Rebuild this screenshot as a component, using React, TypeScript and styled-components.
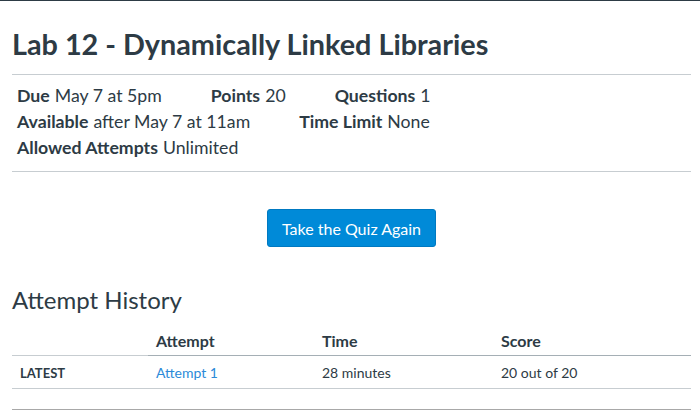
import React from "react";
import styled, { createGlobalStyle } from "styled-components";

const GlobalStyle = createGlobalStyle`
  html, body { margin: 0; padding: 0; background: #fff; }
  body {
    font-family: Lato, "Open Sans", "Liberation Sans", sans-serif;
    color: #2d3b45;
  }
`;

const Page = styled.div`
  border-top: 1px solid #2d3b45;
  padding: 0 9px 0 12px;
  width: 679px;
`;

const Title = styled.h1`
  margin: 0;
  padding-top: 26px;
  font-size: 28.8px;
  line-height: 34px;
  font-weight: 700;
  letter-spacing: 0;
`;

const Rule = styled.hr<{ $tone?: "light" | "dark" }>`
  margin: 0;
  border: 0;
  border-top: 1px solid ${(p) => (p.$tone === "dark" ? "#a8a8a8" : "#c7cdd1")};
`;

const TitleRule = styled(Rule)`
  margin-top: 13px;
`;

const Details = styled.div`
  display: flex;
  flex-direction: column;
  padding: 8px 5px 10px 5px;
`;

const DetailRow = styled.div`
  display: flex;
  column-gap: 49px;
  font-size: 17.7px;
  line-height: 26px;
`;

const Detail = styled.div`
  display: flex;
  gap: 5px;
`;

const Label = styled.span`
  font-weight: 700;
`;

const Value = styled.span`
  font-weight: 400;
`;

const ButtonRow = styled.div`
  display: flex;
  justify-content: center;
  padding: 37px 0 0;
`;

const PrimaryButton = styled.button`
  font-family: inherit;
  font-size: 16px;
  color: #fff;
  background: #008ad8;
  border: 1px solid #0079c1;
  border-radius: 3px;
  height: 38px;
  padding: 0 14px;
  cursor: pointer;
`;

const SectionTitle = styled.h2`
  margin: 0;
  padding-top: 38px;
  font-size: 24px;
  line-height: 30px;
  font-weight: 400;
`;

const Table = styled.table`
  width: 100%;
  margin-top: 16px;
  border-collapse: collapse;
  font-size: 16px;
`;

const Th = styled.th<{ $light?: boolean }>`
  text-align: left;
  font-weight: 700;
  padding: 0 8px 4px;
  line-height: 20px;
  border-bottom: 1px solid ${(p) => (p.$light ? "#c7cdd1" : "#a5afb5")};
`;

const Td = styled.td`
  padding: 0 8px;
  height: 32px;
  font-size: 14px;
  border-bottom: 1px solid #c7cdd1;
`;

const Tag = styled.span`
  font-weight: 700;
  font-size: 13px;
  text-transform: uppercase;
`;

const Link = styled.a`
  color: #2b8ad8;
  text-decoration: none;
`;

const Footer = styled.div`
  margin-top: 20px;
`;

export default function App() {
  return (
    <>
      <GlobalStyle />
      <Page>
        <Title>Lab 12 - Dynamically Linked Libraries</Title>
        <TitleRule />
        <Details>
          <DetailRow>
            <Detail><Label>Due</Label><Value>May 7 at 5pm</Value></Detail>
            <Detail><Label>Points</Label><Value>20</Value></Detail>
            <Detail><Label>Questions</Label><Value>1</Value></Detail>
          </DetailRow>
          <DetailRow>
            <Detail><Label>Available</Label><Value>after May 7 at 11am</Value></Detail>
            <Detail><Label>Time Limit</Label><Value>None</Value></Detail>
          </DetailRow>
          <DetailRow>
            <Detail><Label>Allowed Attempts</Label><Value>Unlimited</Value></Detail>
          </DetailRow>
        </Details>
        <Rule />
        <ButtonRow>
          <PrimaryButton>Take the Quiz Again</PrimaryButton>
        </ButtonRow>
        <SectionTitle>Attempt History</SectionTitle>
        <Table>
          <colgroup>
            <col style={{ width: 136 }} />
            <col style={{ width: 166 }} />
            <col style={{ width: 179 }} />
            <col />
          </colgroup>
          <thead>
            <tr>
              <Th $light></Th>
              <Th>Attempt</Th>
              <Th>Time</Th>
              <Th>Score</Th>
            </tr>
          </thead>
          <tbody>
            <tr>
              <Td><Tag>Latest</Tag></Td>
              <Td><Link href="#">Attempt 1</Link></Td>
              <Td>28 minutes</Td>
              <Td>20 out of 20</Td>
            </tr>
          </tbody>
        </Table>
        <Footer>
          <Rule $tone="dark" />
        </Footer>
      </Page>
    </>
  );
}
